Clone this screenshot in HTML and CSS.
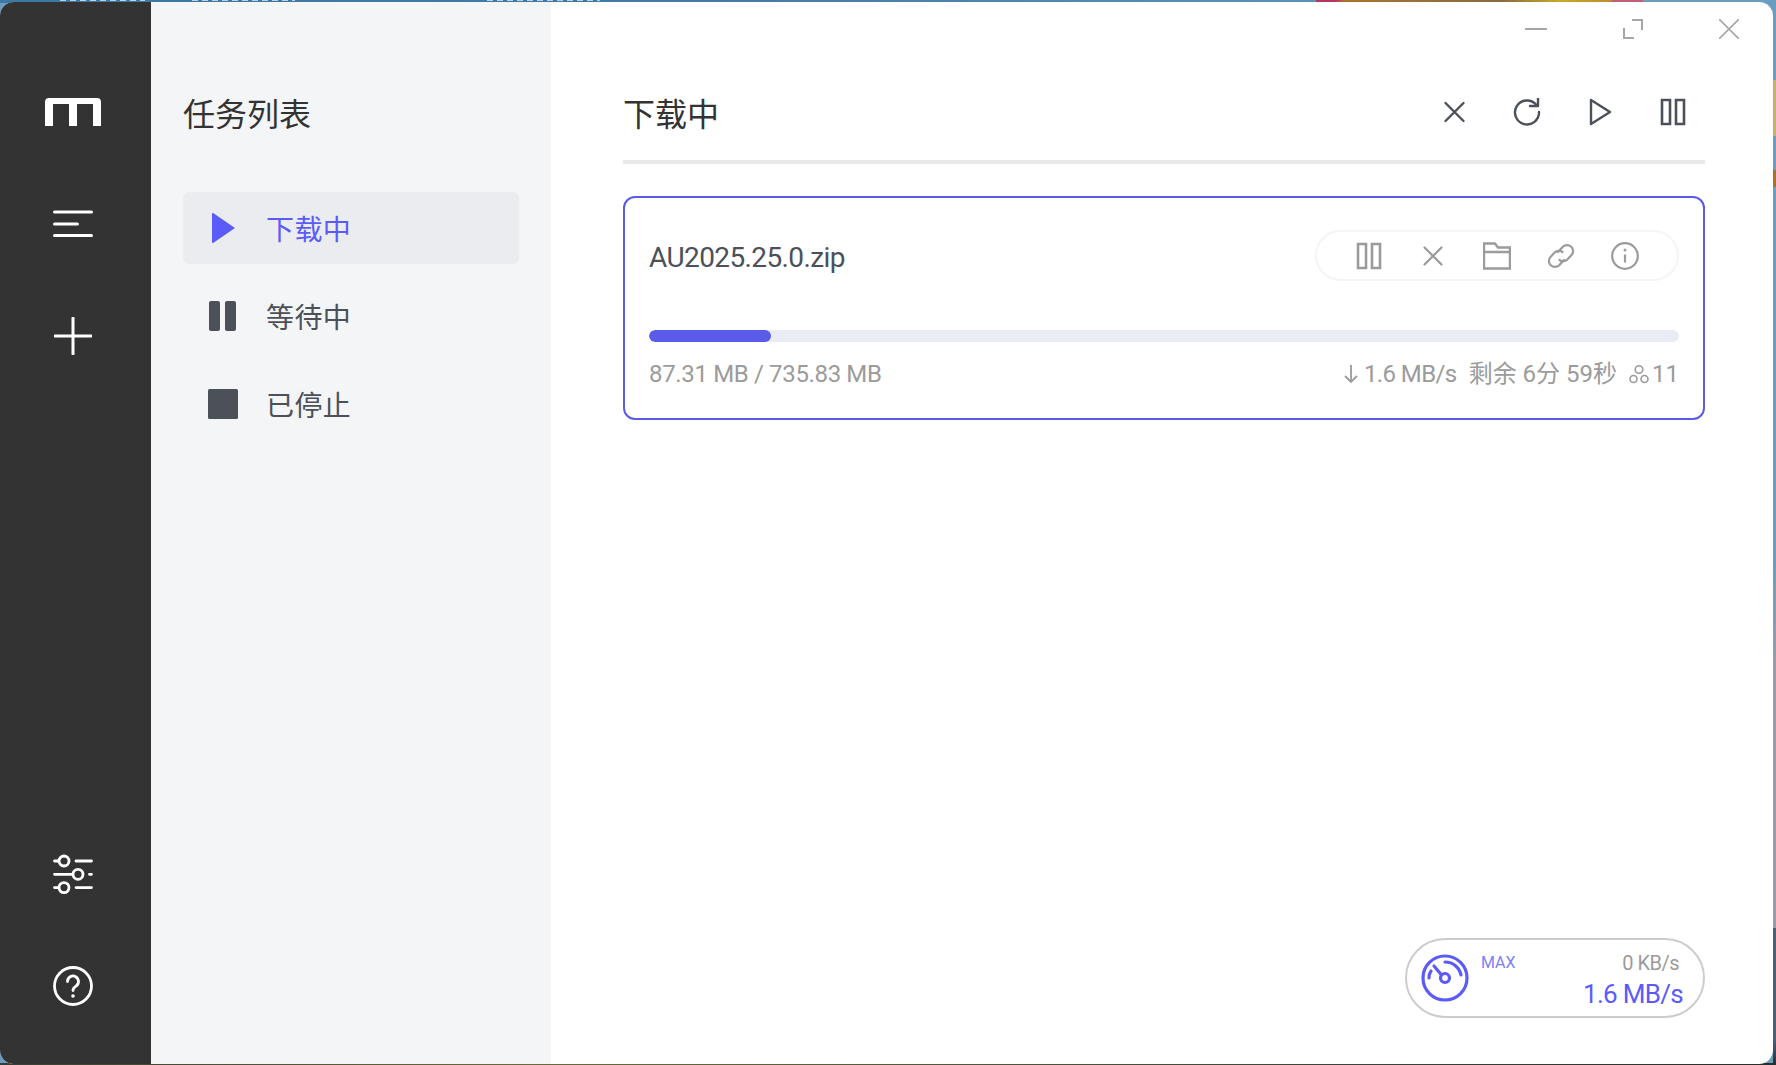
FILE: index.html
```html
<!DOCTYPE html>
<html lang="zh-CN">
<head>
<meta charset="utf-8">
<title>Motrix</title>
<link rel="stylesheet" href="styles.css">
</head>
<body>
<div class="window">
  <aside class="rail">
    <svg class="logo" viewBox="0 0 56 28" width="56" height="28"><path d="M0 28V4a4 4 0 0 1 4-4h48a4 4 0 0 1 4 4v24H48V6H32v22H24V6H8v22z" fill="#fff"/></svg>
    <svg class="rail-icon menu" viewBox="0 0 40 28" width="40" height="28"><path d="M1.500 2h37M1.500 14h23M1.500 25.500h37" stroke="#fff" stroke-width="3" stroke-linecap="round" fill="none"/></svg>
    <svg class="rail-icon plus" viewBox="0 0 38 38" width="38" height="38"><path d="M1 19h36M19 1v36" stroke="#fff" stroke-width="3" stroke-linecap="round" fill="none"/></svg>
    <div class="rail-spacer"></div>
    <svg class="rail-icon sliders" viewBox="0 0 40 40" width="40" height="40"><g stroke="#fff" stroke-width="2.800" stroke-linecap="round" fill="none"><path d="M1.500 7H5M23 7h15.500M1.500 20.300H19M36.500 20.300h2M1.500 33.600H5M23 33.600h15.500"/><circle cx="11" cy="7" r="5"/><circle cx="25" cy="20.300" r="5"/><circle cx="11" cy="33.600" r="5"/></g></svg>
    <svg class="rail-icon help" viewBox="0 0 40 40" width="40" height="40"><circle cx="20" cy="20" r="18.500" stroke="#fff" stroke-width="2.800" fill="none"/><path d="M14.500 15.500a5.500 5.500 0 1 1 8.500 4.600c-2 1.300-3 2.200-3 4.400" stroke="#fff" stroke-width="2.800" fill="none" stroke-linecap="round"/><circle cx="20" cy="30" r="1.800" fill="#fff"/></svg>
  </aside>

  <nav class="lists">
    <h2 class="lists-title">任务列表</h2>
    <ul class="list-nav">
      <li class="nav-item active">
        <svg class="nav-icon" viewBox="0 0 30 30" width="30" height="30"><path d="M4 1a1 1 0 0 1 1.500-.8L27 15 5.500 29.800A1 1 0 0 1 4 29z" fill="#5b5bfa"/></svg>
        <span>下载中</span>
      </li>
      <li class="nav-item">
        <svg class="nav-icon" viewBox="0 0 30 30" width="30" height="30"><rect x="1" y="0" width="11" height="30" rx="2" fill="#4b5059"/><rect x="17" y="0" width="11" height="30" rx="2" fill="#4b5059"/></svg>
        <span>等待中</span>
      </li>
      <li class="nav-item">
        <svg class="nav-icon" viewBox="0 0 30 30" width="30" height="30"><rect x="0" y="0" width="30" height="30" rx="1.500" fill="#4b5059"/></svg>
        <span>已停止</span>
      </li>
    </ul>
  </nav>

  <main class="main">
    <div class="win-controls">
      <svg viewBox="0 0 22 20" width="22" height="20"><path d="M0 10h22" stroke="#a6a6a6" stroke-width="2" fill="none"/></svg>
      <svg viewBox="0 0 20 20" width="20" height="20"><path d="M1 9v10h10M9 1h10v10" stroke="#a6a6a6" stroke-width="2" fill="none"/></svg>
      <svg viewBox="0 0 20 20" width="20" height="20"><path d="M0 0l20 20M20 0L0 20" stroke="#a6a6a6" stroke-width="1.600" fill="none"/></svg>
    </div>

    <header class="head">
      <h1 class="head-title">下载中</h1>
      <div class="head-tools">
        <svg viewBox="0 0 28 28" width="28" height="28"><path d="M5.500 5l18 18M23.500 5l-18 18" stroke="#4b5059" stroke-width="2.400" stroke-linecap="round" fill="none"/></svg>
        <svg viewBox="0 0 28 28" width="28" height="28"><path d="M23 6.500A12 12 0 1 0 26 14" stroke="#4b5059" stroke-width="2.400" stroke-linecap="round" fill="none"/><path d="M25 .5v7.500h-8" stroke="#4b5059" stroke-width="2.400" stroke-linecap="round" stroke-linejoin="round" fill="none"/></svg>
        <svg viewBox="0 0 28 28" width="28" height="28"><path d="M5 2l19 12L5 26z" stroke="#4b5059" stroke-width="2.400" stroke-linejoin="round" fill="none"/></svg>
        <svg viewBox="0 0 28 28" width="28" height="28"><path d="M3 2h8v24H3zM17 2h8v24h-8z" stroke="#4b5059" stroke-width="2.600" fill="none"/></svg>
      </div>
    </header>

    <section class="task">
      <div class="task-top">
        <span class="task-name">AU2025.25.0.zip</span>
        <div class="task-actions">
          <svg viewBox="0 0 28 28" width="28" height="28"><path d="M3 2h8v24H3zM17 2h8v24h-8z" stroke="#9b9b9b" stroke-width="2.600" fill="none"/></svg>
          <svg viewBox="0 0 28 28" width="28" height="28"><path d="M5.500 5.500l17 17M22.500 5.500l-17 17" stroke="#9b9b9b" stroke-width="2.200" stroke-linecap="round" fill="none"/></svg>
          <svg viewBox="0 0 28 28" width="28" height="28"><path d="M1 26.500V1.500h11l3 4h12v21zM1 10h26" stroke="#9b9b9b" stroke-width="2.400" fill="none"/></svg>
          <svg viewBox="0 0 28 28" width="28" height="28"><g stroke="#9b9b9b" stroke-width="2.200" fill="none" stroke-linecap="round"><path d="M11 10l4.800-5.200a6 6 0 0 1 8.500 8.500l-4 4.200a6 6 0 0 1-7.800.5"/><path d="M17 18l-4.800 5.200a6 6 0 0 1-8.500-8.500l4-4.200a6 6 0 0 1 7.800-.5"/></g></svg>
          <svg viewBox="0 0 28 28" width="28" height="28"><circle cx="14" cy="14" r="12.800" stroke="#9b9b9b" stroke-width="2.200" fill="none"/><path d="M14 12.500v8" stroke="#9b9b9b" stroke-width="2.200" fill="none"/><circle cx="14" cy="8" r="1.500" fill="#9b9b9b"/></svg>
        </div>
      </div>
      <div class="progress"><div class="progress-fill" style="width:11.87%"></div></div>
      <div class="task-stats">
        <span class="stat-size">87.31 MB / 735.83 MB</span>
        <div class="stats-right">
          <span class="stat-speed"><svg viewBox="0 0 14 20" width="14" height="20"><path d="M7 1v17M1 12l6 6 6-6" stroke="#9b9b9b" stroke-width="1.800" fill="none"/></svg>1.6 MB/s</span>
          <span>剩余 6分 59秒</span>
          <span class="stat-peers"><svg viewBox="0 0 20 20" width="20" height="20"><g stroke="#9b9b9b" stroke-width="1.600" fill="none"><circle cx="10" cy="5.500" r="3.800"/><circle cx="4.500" cy="15" r="3.500"/><circle cx="15.500" cy="15" r="3.500"/></g></svg>11</span>
        </div>
      </div>
    </section>

    <div class="main-spacer"></div>

    <div class="speedo-row">
      <div class="speedo">
        <svg class="speedo-icon" viewBox="0 0 48 48" width="48" height="48"><g stroke="#5b5bfa" stroke-width="3.200" fill="none" stroke-linecap="round"><circle cx="24" cy="24" r="22"/><circle cx="24" cy="24" r="4.500"/><path d="M20.500 21L13 12M8 24c0-3 .5-5 2-7M24 8c8 0 14.500 5.500 16 13"/></g></svg>
        <span class="speedo-max">MAX</span>
        <div class="speedo-values">
          <span class="speedo-up">0 KB/s</span>
          <span class="speedo-down">1.6 MB/s</span>
        </div>
      </div>
    </div>
  </main>
</div>
</body>
</html>
```

FILE: styles.css
```css
* { box-sizing: border-box; }

html, body { height: 100%; }

body {
  margin: 0;
  padding: 2px 3px 1px 0;
  font-family: Roboto, "Noto Sans CJK SC", sans-serif;
  background:
    repeating-linear-gradient(90deg, #c3d0d8 0 6px, #3b78a3 6px 10px) 60px 0 / 85px 1px no-repeat,
    repeating-linear-gradient(90deg, #c3d0d8 0 6px, #3b78a3 6px 10px) 192px 0 / 103px 1px no-repeat,
    repeating-linear-gradient(90deg, #c3d0d8 0 6px, #3b78a3 6px 10px) 487px 0 / 113px 1px no-repeat,
    linear-gradient(90deg, #3b78a3 0, #3f7ba5 700px, #5b93b8 1316px, #b5355f 1316px, #b5355f 1335px, #a8752f 1345px, #8a6a3e 1500px, #c9a832 1560px, #c08a30 1612px, #c2607a 1612px, #c2607a 1643px, #6a9dc0 1643px, #6a9dc0 100%) top / 100% 3px no-repeat,
    linear-gradient(90deg, #3a3d34, #6a6a3c 30%, #3f4a3a 70%, #2a2e2c) bottom / 100% 2px no-repeat,
    linear-gradient(180deg, #6a9dc0 0, #6a9dc0 80px, #c8b070 80px, #c8b070 136px, #6a9dc0 136px, #6a9dc0 170px, #a8722c 170px, #a8722c 187px, #6a9dc0 187px, #6a9dc0 560px, #9a9aaa 660px, #9a9aaa 928px, #4a5f7f 928px, #4a5f7f 1040px, #2a2e2c 1065px) right / 3px 100% no-repeat,
    #6a9dc0;
  overflow: hidden;
}

.window {
  height: 100%;
  display: flex;
  border-radius: 14px;
  overflow: hidden;
  background: #fff;
}

.rail {
  width: 151px;
  flex: none;
  background: #333;
  display: flex;
  flex-direction: column;
  align-items: center;
  padding: 96px 5px 58px 0;
}

.logo { display: block; }
.rail-icon { display: block; }
.menu { margin-top: 84px; }
.plus { margin-top: 79px; }
.rail-spacer { flex: 1; }
.sliders { margin-bottom: 72px; }

.lists {
  width: 400px;
  flex: none;
  background: #f4f5f7;
  padding: 0 32px;
}

.lists-title {
  margin: 0;
  padding-top: 90px;
  height: 190px;
  font-size: 32px;
  line-height: 46px;
  font-weight: 400;
  color: #333;
}

.list-nav {
  list-style: none;
  margin: 0;
  padding: 0;
  display: flex;
  flex-direction: column;
  gap: 16px;
}

.nav-item {
  height: 72px;
  display: flex;
  align-items: center;
  gap: 28px;
  padding-left: 25px;
  border-radius: 6px;
  font-size: 28px;
  letter-spacing: 0.4px;
  color: #4b5059;
}

.nav-item.active { background: #ebecf0; color: #5b5bfa; }
.nav-icon { flex: none; display: block; }

.main {
  flex: 1;
  min-width: 0;
  padding: 0 68px 46px 72px;
  display: flex;
  flex-direction: column;
  position: relative;
}

.win-controls {
  position: absolute;
  top: 17px;
  right: 34px;
  display: flex;
  align-items: flex-start;
  gap: 76px;
}

.head {
  height: 162px;
  padding-top: 90px;
  display: flex;
  align-items: flex-start;
  justify-content: space-between;
  border-bottom: 4px solid #e8e8e8;
}

.head-title {
  margin: 0;
  font-size: 32px;
  line-height: 46px;
  font-weight: 400;
  color: #333;
}

.head-tools {
  display: flex;
  gap: 45px;
  padding: 6px 18px 0 0;
}

.task {
  margin-top: 32px;
  height: 224px;
  border: 2px solid #5b5bea;
  border-radius: 12px;
  padding: 32px 24px 0;
}

.task-top {
  height: 51px;
  display: flex;
  align-items: center;
  justify-content: space-between;
}

.task-name {
  margin-top: 4px;
  font-size: 28px;
  letter-spacing: -0.6px;
  color: #4b5059;
}

.task-actions {
  height: 51px;
  padding: 0 38px;
  border: 2px solid #f5f5f5;
  border-radius: 26px;
  display: flex;
  align-items: center;
  gap: 36px;
}

.progress {
  margin-top: 49px;
  height: 12px;
  border-radius: 6px;
  background: #e9ecf5;
  overflow: hidden;
}

.progress-fill {
  height: 100%;
  border-radius: 6px;
  background: #5b5bea;
}

.task-stats {
  margin-top: 15px;
  display: flex;
  justify-content: space-between;
  font-size: 24px;
  line-height: 34px;
  color: #9b9b9b;
}

.stat-size { letter-spacing: -0.35px; }
.stats-right { display: flex; gap: 12px; }
.stat-speed, .stat-peers { display: flex; align-items: center; gap: 6px; }
.stat-speed { letter-spacing: -0.6px; }
.stat-peers { gap: 3px; }

.main-spacer { flex: 1; }

.speedo-row { display: flex; justify-content: flex-end; }

.speedo {
  width: 300px;
  height: 80px;
  border: 2px solid #ccc;
  border-radius: 40px;
  display: flex;
  align-items: flex-start;
  padding: 14px 20px 0 14px;
}

.speedo-icon { flex: none; }

.speedo-max {
  margin-left: 12px;
  margin-top: -1px;
  font-size: 16px;
  line-height: 20px;
  color: #7f7ff5;
}

.speedo-values {
  margin-left: auto;
  margin-top: -4px;
  display: flex;
  flex-direction: column;
  align-items: flex-end;
}

.speedo-up { font-size: 20px; line-height: 26px; letter-spacing: -0.5px; color: #9b9b9b; margin-right: 4px; }
.speedo-down { font-size: 26px; line-height: 36px; letter-spacing: -0.7px; color: #5b5bfa; }
```
